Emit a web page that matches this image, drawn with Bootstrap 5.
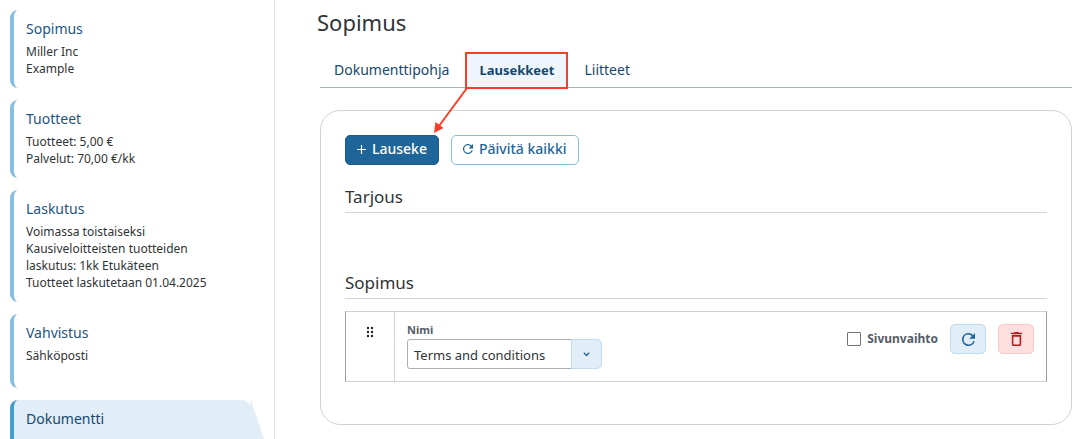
<!DOCTYPE html>
<html lang="fi">
<head>
<meta charset="utf-8">
<meta name="viewport" content="width=device-width, initial-scale=1">
<title>Sopimus</title>
<link href="https://cdn.jsdelivr.net/npm/bootstrap@5.3.0/dist/css/bootstrap.min.css" rel="stylesheet">
<style>
body { font-family: "Noto Sans", sans-serif; color: #2f3437; font-size: 13px; }
.page { min-height: 100vh; overflow: hidden; }

/* Step navigation */
.steps { flex: 0 0 275px; padding: 10px 24px 0 10px; border-right: 1px solid #dfe2e4; gap: 12px; height: 100vh; overflow: hidden; }
.step { flex: none; min-height: 74px; padding: 8px 12px 11px; border-left: 4px solid #86bfe1; border-radius: 8px; color: #2f3437; font-size: 12px; line-height: 17px; text-decoration: none; }
.step-name { font-size: 14px; line-height: 22px; margin-bottom: 3px; color: #1d5580; }
.step.active { position: relative; background: #e1edf7; border-left-color: #469dd0; min-height: 80px; }
.step.active::after { content: ""; position: absolute; left: 100%; top: 0; width: 24px; height: 80px; margin-left: -1px; background: #e1edf7; clip-path: polygon(0 8px, 2px 0, 100% 66px, 100% 100%, 0 100%); }
.step.active .step-name { color: #16486f; }

/* Main area */
.main { padding: 8px 8px 14px 45px; min-width: 0; }
.main h1 { font-size: 22px; line-height: 28px; margin: 0 0 16px -3px; font-weight: 400; }
.doc-tabs { border-bottom: 1px solid #a7b4b9; margin-bottom: 22px; gap: 2px; }
.doc-tabs .nav-link { font-size: 14px; line-height: 18px; padding: 9px 14px 8px; color: #16486f; border-radius: 0; }
.doc-tabs .nav-link.active { background: #eff5fc; font-size: 13px; font-weight: 700; }
.marked { position: relative; }
.marked::after { content: ""; position: absolute; inset: 0 0 -2px 0; border: 2px solid #fb3e27; pointer-events: none; }
.arrow { position: absolute; right: 100%; top: 100%; margin-right: -3px; z-index: 2; pointer-events: none; }

.panel { border: 1px solid #cfd3d7; border-radius: 20px; padding: 24px 24px 42px; }
.actions { gap: 12px; margin-bottom: 21px; }
.actions .btn { font-size: 14px; gap: 6px; }
.btn { font-size: 13px; line-height: 18px; font-weight: 500; padding: 5px 12px; border-radius: 5px; height: 30px; }
.actions .btn { padding: 4px 11px 6px; }
.btn-main { background: #1e659a; border-color: #1e5b8a; color: #fff; }
.btn-line { background: #fff; border-color: #86bfe1; color: #1e659a; }
.btn-main:hover { background: #16486f; color: #fff; }
.btn-line:hover, .btn-soft:hover { background: #d2e5f4; border-color: #86bfe1; }
.btn-soft { background: #e1edf7; border-color: #bedcf0; color: #1e659a; }
.btn-bin { background: #fddfdf; border-color: #fcc9c9; color: #b71c1c; }
.btn-square { width: 36px; padding: 0; }
.panel h2 { font-size: 17px; line-height: 22px; font-weight: 400; border-bottom: 1px solid #cfd3d7; padding-bottom: 4px; margin: 0; }
.clause-list { min-height: 59px; padding-top: 12px; }
.clause { border: 1px solid #cfd3d7; border-left-color: #999ea2; border-right-color: #999ea2; min-height: 71px; }
.handle { flex: 0 0 49px; border-right: 1px solid #cfd3d7; padding-top: 14px; cursor: grab; }
.clause-body { padding: 12px; }
.field-name { font-size: 11px; line-height: 11px; margin-bottom: 4px; font-weight: 700; color: #555d66; display: block; }
.combo { width: 195px; }
.combo .form-control { font-size: 13px; line-height: 18px; padding: 6px 6px 4px; height: 30px; border-color: #a7b0b5; color: #2f3437; border-radius: 3px; }
.combo .btn { width: 31px; padding: 0; }
.row-tools { gap: 12px; }
.tick-group { gap: 6px; }
.form-check-input.tick { width: 14px; height: 14px; margin: 0; border-color: #6c757d; border-radius: 1px; }
.tick-name { font-size: 12px; line-height: 16px; font-weight: 700; color: #555d66; }
</style>
</head>
<body>
<div class="page d-flex">
  <nav class="steps d-flex flex-column" aria-label="Vaiheet">
    <a class="step" href="#"><div class="step-name">Sopimus</div>Miller Inc<br>Example</a>
    <a class="step" href="#"><div class="step-name">Tuotteet</div>Tuotteet: 5,00 €<br>Palvelut: 70,00 €/kk</a>
    <a class="step" href="#"><div class="step-name">Laskutus</div>Voimassa toistaiseksi<br>Kausiveloitteisten tuotteiden laskutus: 1kk Etukäteen<br>Tuotteet laskutetaan 01.04.2025</a>
    <a class="step" href="#"><div class="step-name">Vahvistus</div>Sähköposti</a>
    <a class="step active" href="#" aria-current="step"><div class="step-name">Dokumentti</div></a>
  </nav>

  <main class="main flex-grow-1">
    <h1>Sopimus</h1>
    <ul class="nav doc-tabs">
      <li class="nav-item"><a class="nav-link" href="#">Dokumenttipohja</a></li>
      <li class="nav-item marked">
        <a class="nav-link active" href="#" aria-current="page">Lausekkeet</a>
        <svg class="arrow" width="36" height="48" viewBox="0 0 36 48" aria-hidden="true"><path d="M35 1 7 39" stroke="#fb3e27" stroke-width="2"/><path d="M2 46 3.500 35 11.500 41Z" fill="#fb3e27"/></svg>
      </li>
      <li class="nav-item"><a class="nav-link" href="#">Liitteet</a></li>
    </ul>

    <section class="panel">
      <div class="actions d-flex">
        <button type="button" class="btn btn-main d-flex align-items-center"><svg width="9" height="9" viewBox="0 0 9 9" aria-hidden="true"><path d="M4.500 0V9M0 4.500H9" stroke="currentColor" stroke-width="1.200"/></svg>Lauseke</button>
        <button type="button" class="btn btn-line d-flex align-items-center"><svg width="10" height="10" viewBox="0 0 16 16" fill="currentColor" aria-hidden="true"><path d="M13.650 2.350A8 8 0 1 0 15.730 10H13.650A6 6 0 1 1 8 2c1.660 0 3.140.690 4.220 1.780L9 7h7V0z"/></svg>Päivitä kaikki</button>
      </div>
      <h2>Tarjous</h2>
      <div class="clause-list"></div>
      <h2>Sopimus</h2>
      <div class="clause-list">
        <div class="clause d-flex">
          <div class="handle d-flex justify-content-center">
            <svg width="8" height="12" viewBox="0 0 8 12" fill="#222" aria-hidden="true"><circle cx="2" cy="2" r="1.200"/><circle cx="6" cy="2" r="1.200"/><circle cx="2" cy="6" r="1.200"/><circle cx="6" cy="6" r="1.200"/><circle cx="2" cy="10" r="1.200"/><circle cx="6" cy="10" r="1.200"/></svg>
          </div>
          <div class="clause-body d-flex flex-grow-1 align-items-start justify-content-between">
            <div>
              <label class="field-name" for="clause-name">Nimi</label>
              <div class="input-group combo flex-nowrap">
                <input type="text" class="form-control" id="clause-name" value="Terms and conditions">
                <button type="button" class="btn btn-soft d-flex align-items-center justify-content-center" aria-label="Avaa"><svg width="7" height="5" viewBox="0 0 7 5" fill="none" aria-hidden="true"><path d="M.8.8 3.500 3.500 6.200.8" stroke="currentColor" stroke-width="1.300"/></svg></button>
              </div>
            </div>
            <div class="row-tools d-flex align-items-center">
              <div class="tick-group d-flex align-items-center">
                <input class="form-check-input tick" type="checkbox" id="page-break">
                <label class="tick-name" for="page-break">Sivunvaihto</label>
              </div>
              <button type="button" class="btn btn-soft btn-square d-flex align-items-center justify-content-center" aria-label="Päivitä"><svg width="13" height="13" viewBox="0 0 16 16" fill="currentColor" aria-hidden="true"><path d="M13.650 2.350A8 8 0 1 0 15.730 10H13.650A6 6 0 1 1 8 2c1.660 0 3.140.690 4.220 1.780L9 7h7V0z"/></svg></button>
              <button type="button" class="btn btn-bin btn-square d-flex align-items-center justify-content-center" aria-label="Poista"><svg width="11" height="14" viewBox="0 0 14 18" fill="currentColor" aria-hidden="true"><path d="M11 6v10H3V6h8M9.500 0h-5l-1 1H0v2h14V1h-3.500l-1-1zM13 4H1v12c0 1.100.9 2 2 2h8c1.100 0 2-.9 2-2V4z"/></svg></button>
            </div>
          </div>
        </div>
      </div>
    </section>
  </main>
</div>
<script src="https://cdn.jsdelivr.net/npm/bootstrap@5.3.0/dist/js/bootstrap.bundle.min.js"></script>
</body>
</html>
